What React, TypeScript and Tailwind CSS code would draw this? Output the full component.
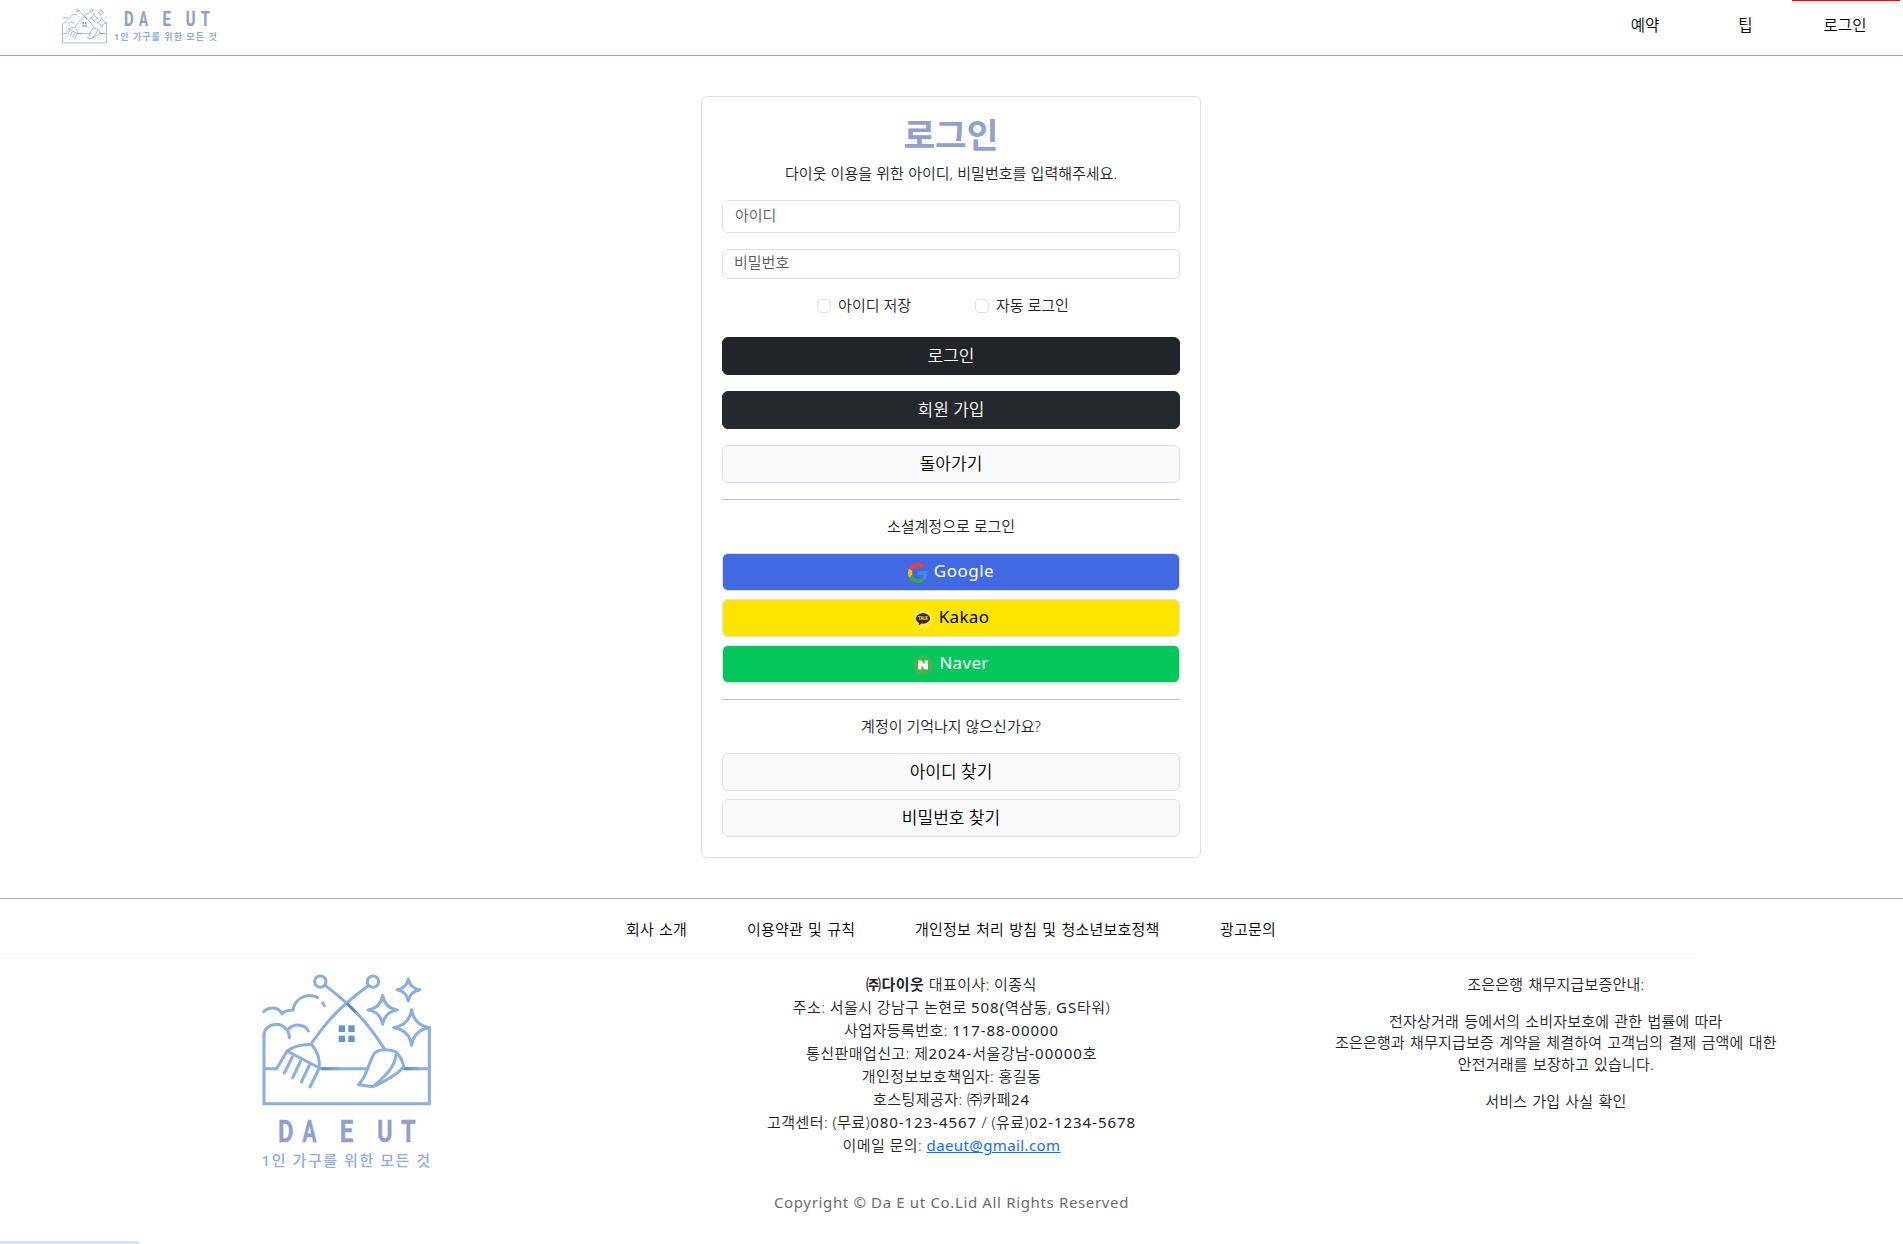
import type { ReactNode } from 'react';

const LINE = '#8aaee0';

function LogoArt({ className, viewBox }: { className: string; viewBox: string }) {
  return (
    <svg className={className} viewBox={viewBox} fill="none" stroke={LINE} strokeWidth="9" strokeLinecap="round" strokeLinejoin="round">
      <defs>
        <linearGradient id="dusk" gradientUnits="userSpaceOnUse" x1="244" x2="300" y1="0" y2="0">
          <stop offset="0" stopColor="#5f83b5" />
          <stop offset="1" stopColor={LINE} />
        </linearGradient>
        <linearGradient id="dusk-right" gradientUnits="userSpaceOnUse" x1="494" x2="540" y1="0" y2="0">
          <stop offset="0" stopColor="#5f83b5" />
          <stop offset="1" stopColor={LINE} />
        </linearGradient>
      </defs>
      {/* frame and ground */}
      <path d="M73 228V430H569V202" strokeLinejoin="miter" />
      <path d="M76 325H111M494 325H566M244 325H382" />
      <path d="M246 325H300" stroke="url(#dusk)" strokeLinecap="butt" />
      <path d="M494 325H540" stroke="url(#dusk-right)" strokeLinecap="butt" />
      {/* clouds */}
      <path d="M72 154C88 139 116 137 127 161C136 151 148 149 160 150C166 112 204 96 234 112" />
      <path d="M249 128L254 136" />
      <path d="M73 230C70 184 137 178 148 222L149 232" />
      <path d="M148 204C166 187 198 193 206 212" />
      {/* rake and brush handles */}
      <circle cx="242" cy="64" r="17" />
      <circle cx="400" cy="64" r="17" />
      <path d="M257 76C332 133 382 183 433 264" />
      <path d="M386 76C311 130 264 178 216 248" />
      <path d="M324 131L345 153" stroke="#6488ba" />
      {/* rake */}
      <path d="M111 325L142 272C164 257 190 251 216 253C236 275 241 296 239 323L142 272M239 323L211 380" />
      <path d="M158 290L134 338M183 302L159 352M209 315L185 365" />
      {/* brush */}
      <path d="M356 373C382 350 384 312 404 279C416 266 450 264 470 276C484 288 489 302 492 320C469 346 437 363 401 379ZM470 276C468 320 436 346 401 379" />
      {/* sparkles */}
      <path d="M506 55Q511 84 541 88Q511 93 506 122Q501 93 472 88Q501 84 506 55Z" />
      <path d="M429 105Q435 143 473 149Q435 155 429 192Q423 155 385 149Q423 143 429 105Z" />
      <path d="M516 148Q523 194 569 202Q523 209 516 255Q509 209 462 202Q509 194 516 148Z" />
      {/* window */}
      <g fill="#6497c4" stroke="none">
        <rect x="297" y="195" width="19" height="20" />
        <rect x="326" y="195" width="19" height="20" />
        <rect x="297" y="226" width="19" height="19" />
        <rect x="326" y="226" width="19" height="19" />
      </g>
    </svg>
  );
}

const LETTERS: [string, number, number][] = [
  ['D', 115, 47],
  ['A', 188, 43],
  ['E', 301, 41],
  ['U', 413, 47],
  ['T', 485, 44],
];

function WordMark({ className }: { className: string }) {
  return (
    <svg className={`overflow-visible ${className}`} viewBox="115 477 415 69" preserveAspectRatio="none" fill="#909fcb" stroke="#909fcb" strokeWidth="1">
      {LETTERS.map(([letter, x, width]) => (
        <text key={letter} x={x} y="545" textLength={width} lengthAdjust="spacingAndGlyphs" fontFamily="Roboto" fontWeight="700" fontSize="96">
          {letter}
        </text>
      ))}
    </svg>
  );
}

function Button({ className, children }: { className: string; children: ReactNode }) {
  return (
    <button className={`flex h-[38px] w-full shrink-0 items-center justify-center rounded-md border text-[17px] leading-6 ${className}`}>
      {children}
    </button>
  );
}

function GoogleIcon() {
  return (
    <svg className="mt-[2px] size-5" viewBox="0 0 48 48">
      <path fill="#ea4335" d="M24 9.5c3.54 0 6.71 1.22 9.21 3.6l6.85-6.85C35.9 2.38 30.47 0 24 0 14.62 0 6.51 5.38 2.56 13.22l7.98 6.19C12.43 13.72 17.74 9.5 24 9.5z" />
      <path fill="#4285f4" d="M46.98 24.55c0-1.57-.15-3.09-.38-4.55H24v9.02h12.94c-.58 2.96-2.26 5.48-4.78 7.18l7.73 6c4.51-4.18 7.09-10.36 7.09-17.65z" />
      <path fill="#fbbc05" d="M10.53 28.59c-.48-1.45-.76-2.99-.76-4.59s.27-3.14.76-4.59l-7.98-6.19C.92 16.46 0 20.12 0 24c0 3.88.92 7.54 2.56 10.78l7.97-6.19z" />
      <path fill="#34a853" d="M24 48c6.48 0 11.93-2.13 15.89-5.81l-7.73-6c-2.15 1.45-4.92 2.3-8.16 2.3-6.26 0-11.57-4.22-13.47-9.91l-7.98 6.19C6.51 42.62 14.62 48 24 48z" />
    </svg>
  );
}

function KakaoIcon() {
  return (
    <svg className="mt-[2px] size-5" viewBox="0 0 20 20">
      <circle cx="10" cy="10" r="10" fill="#ffe93b" />
      <path fill="#3f2622" d="M10 4.2c-3.9 0-7 2.4-7 5.4 0 1.9 1.3 3.6 3.2 4.5l-.7 2.4 3-1.9c.5.1 1 .1 1.5.1 3.9 0 7-2.3 7-5.1s-3.1-5.4-7-5.4z" />
      <text x="5.2" y="11.4" textLength="9.6" lengthAdjust="spacingAndGlyphs" fontFamily="Roboto" fontWeight="900" fontSize="4.6" fill="#f5dc3a">TALK</text>
    </svg>
  );
}

function NaverIcon() {
  return (
    <svg className="mt-[2px] size-5" viewBox="0 0 20 20">
      <circle cx="10" cy="10" r="10" fill="#41b549" />
      <path fill="#fff" d="M5 5.5h3.7l2.9 4.2V5.5H15v9h-3.6L8.4 10.2v4.3H5z" />
    </svg>
  );
}

function Check({ label }: { label: string }) {
  return (
    <label className="flex items-center gap-[7px]">
      <span className="mt-px size-[14px] rounded-[4px] border border-[#dee2e6]" />
      <span>{label}</span>
    </label>
  );
}

function Num({ children }: { children: ReactNode }) {
  return <span className="font-normal tracking-[0.95px]">{children}</span>;
}

export default function App() {
  return (
    <div className="relative flex h-[1244px] w-[1903px] flex-col overflow-hidden bg-white font-['Noto_Sans','Noto_Sans_CJK_KR',sans-serif] text-[15px] font-[350] text-[#212529]">
      <header className="flex h-14 shrink-0 items-start justify-between border-b border-[#97a3cd] pl-[62px] pr-[3px]">
        <div className="flex pt-2">
          <LogoArt className="h-[36px] w-[45px]" viewBox="67 40 508 398" />
          <div className="ml-2 w-[110px] pt-1">
            <WordMark className="ml-[9px] h-[14px] w-[86px]" />
            <p className="-ml-px mt-[4px] whitespace-nowrap text-[9px] font-bold leading-[13px] tracking-[1.05px] text-[#8aaee0]">1인 가구를 위한 모든 것</p>
          </div>
        </div>
        <nav className="flex text-[15.5px] text-black">
          <a className="w-[108px] pt-[13px] text-center leading-6">예약</a>
          <a className="w-[93px] pt-[13px] text-center leading-6">팁</a>
          <a className="w-[108px] border-t border-[#ff0000] pr-[2px] pt-[12px] text-center leading-6">로그인</a>
        </nav>
      </header>

      <main className="ml-[701px] mt-10 flex h-[762px] w-[500px] shrink-0 flex-col rounded-md border border-[#dcdee0] px-5">
        <h1 className="mt-[13px] text-center text-[34.5px] font-bold leading-[50px] text-[#8fa2cf]">로그인</h1>
        <p className="mt-px text-center leading-6 [word-spacing:0.4px]">다이웃 이용을 위한 아이디, 비밀번호를 입력해주세요.</p>
        <input className="mt-[15px] h-[33px] shrink-0 rounded-md border border-[#dee2e6] px-3 pb-1 placeholder:text-[#595c5f]" placeholder="아이디" />
        <input type="password" className="mt-4 h-[30px] shrink-0 rounded-md border border-[#dee2e6] px-[11px] pb-1 placeholder:text-[#595c5f]" placeholder="비밀번호" />
        <div className="mt-[14px] flex h-6 justify-center gap-16 pr-[16px] leading-6">
          <Check label="아이디 저장" />
          <Check label="자동 로그인" />
        </div>
        <div className="mt-5 flex flex-col gap-4">
          <Button className="border-[#212529] bg-[#212529] text-white">로그인</Button>
          <Button className="border-[#25282d] bg-[#25282d] text-white">회원 가입</Button>
          <Button className="border-[#dee2e6] bg-[#f8f9fa] text-black">돌아가기</Button>
        </div>
        <div className="mt-4 h-px shrink-0 bg-[#c4c5c7]" />
        <p className="mt-[14px] text-center leading-6">소셜계정으로 로그인</p>
        <div className="mt-[15px] flex flex-col gap-2">
          <Button className="gap-[6px] border-[#dee2e6] bg-[#4169e1] text-white"><GoogleIcon /><span className="-mt-[2px] font-normal tracking-[0.5px]">Google</span></Button>
          <Button className="gap-[6px] border-[#dee2e6] bg-[#fee500] text-black"><KakaoIcon /><span className="-mt-[2px] font-normal tracking-[0.3px]">Kakao</span></Button>
          <Button className="gap-[6px] border-[#dee2e6] bg-[#03c75a] text-white"><NaverIcon /><span className="-mt-[2px] font-normal tracking-[0.3px]">Naver</span></Button>
        </div>
        <div className="mt-4 h-px shrink-0 bg-[#c4c5c7]" />
        <p className="mt-[14px] text-center leading-6">계정이 기억나지 않으신가요?</p>
        <div className="mt-[15px] flex flex-col gap-2">
          <Button className="border-[#dee2e6] bg-[#f8f9fa] text-black">아이디 찾기</Button>
          <Button className="border-[#dee2e6] bg-[#f8f9fa] text-black">비밀번호 찾기</Button>
        </div>
      </main>

      <footer className="mt-10 border-t border-[#97a3cd]">
        <div className="flex h-[59px] w-[1696px] items-center border-b border-[#f1f2f3] pl-[626px] pt-[2px] tracking-[0.2px] text-black [word-spacing:1px]">
          <a className="w-[121px]">회사 소개</a>
          <a className="w-[168px]">이용약관 및 규칙</a>
          <a className="w-[305px] whitespace-nowrap">개인정보 처리 방침 및 청소년보호정책</a>
          <a>광고문의</a>
        </div>
        <div className="grid h-[219px] grid-cols-3 px-[45px] text-center">
          <div className="flex flex-col items-center pr-px pt-[15px]">
            <LogoArt className="h-[134px] w-[171px]" viewBox="64 38 513 402" />
            <WordMark className="mt-[12px] h-[23px] w-[138px]" />
            <p className="mt-[6px] whitespace-nowrap text-[15px] font-medium leading-6 tracking-[1.55px] text-[#8aaee0]">1인 가구를 위한 모든 것</p>
          </div>
          <div className="pt-[15px] leading-[23px] tracking-[0.45px]">
            <p><b className="font-bold">㈜다이웃</b> 대표이사: 이종식</p>
            <p>주소: 서울시 강남구 논현로 <Num>508(</Num>역삼동, <Num>GS</Num>타워)</p>
            <p>사업자등록번호: <Num>117-88-00000</Num></p>
            <p>통신판매업신고: 제<Num>2024-</Num>서울강남<Num>-00000</Num>호</p>
            <p>개인정보보호책임자: 홍길동</p>
            <p>호스팅제공자: ㈜카페<Num>24</Num></p>
            <p>고객센터: (무료)<Num>080-123-4567</Num> / (유료)<Num>02-1234-5678</Num></p>
            <p>이메일 문의: <a className="font-normal tracking-[0.4px] text-[#0d6efd] underline">daeut@gmail.com</a></p>
          </div>
          <div className="pt-[16px] leading-[21.5px] tracking-[0.2px] [word-spacing:1px]">
            <p>조은은행 채무지급보증안내:</p>
            <p className="mt-[15px]">전자상거래 등에서의 소비자보호에 관한 법률에 따라<br />조은은행과 채무지급보증 계약을 체결하여 고객님의 결제 금액에 대한<br />안전거래를 보장하고 있습니다.</p>
            <p className="mt-4">서비스 가입 사실 확인</p>
          </div>
        </div>
        <p className="mt-[13px] text-center font-normal leading-6 tracking-[0.65px] text-[#6a6e72]">Copyright © Da E ut Co.Lid All Rights Reserved</p>
      </footer>
      <div className="absolute bottom-0 left-0 h-[3px] w-[139px] rounded-tr bg-[#d3e3fd]" />
    </div>
  );
}
